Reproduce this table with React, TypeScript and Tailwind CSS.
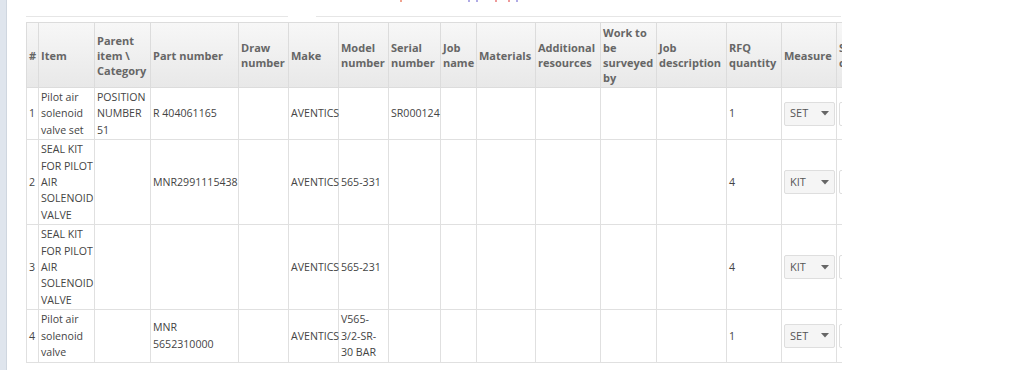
import React from "react";

const widths = [12, 56, 56, 88, 50, 50, 50, 52, 36, 59, 65, 56, 70, 55, 55, 90];

const headers: string[][] = [
  ["#"],
  ["Item"],
  ["Parent", "item \\", "Category"],
  ["Part number"],
  ["Draw", "number"],
  ["Make"],
  ["Model", "number"],
  ["Serial", "number"],
  ["Job", "name"],
  ["Materials"],
  ["Additional", "resources"],
  ["Work to", "be", "surveyed", "by"],
  ["Job", "description"],
  ["RFQ", "quantity"],
  ["Measure"],
  ["Supplier", "comment"],
];

type Row = {
  n: string;
  item: string[];
  parent: string[];
  part: string[];
  make: string;
  model: string[];
  serial: string;
  qty: string;
  measure: string;
};

const rows: Row[] = [
  {
    n: "1",
    item: ["Pilot air", "solenoid", "valve set"],
    parent: ["POSITION", "NUMBER", "51"],
    part: ["R 404061165"],
    make: "AVENTICS",
    model: [],
    serial: "SR000124",
    qty: "1",
    measure: "SET",
  },
  {
    n: "2",
    item: ["SEAL KIT", "FOR PILOT", "AIR", "SOLENOID", "VALVE"],
    parent: [],
    part: ["MNR2991115438"],
    make: "AVENTICS",
    model: ["565-331"],
    serial: "",
    qty: "4",
    measure: "KIT",
  },
  {
    n: "3",
    item: ["SEAL KIT", "FOR PILOT", "AIR", "SOLENOID", "VALVE"],
    parent: [],
    part: [],
    make: "AVENTICS",
    model: ["565-231"],
    serial: "",
    qty: "4",
    measure: "KIT",
  },
  {
    n: "4",
    item: ["Pilot air", "solenoid", "valve"],
    parent: [],
    part: ["MNR", "5652310000"],
    make: "AVENTICS",
    model: ["V565-", "3/2-SR-", "30 BAR"],
    serial: "",
    qty: "1",
    measure: "SET",
  },
];

function Lines({ lines }: { lines: string[] }) {
  return (
    <>
      {lines.map((l, i) => (
        <div key={i} className="whitespace-nowrap">
          {l}
        </div>
      ))}
    </>
  );
}

const td = "border border-[#e0e0e0] px-[2px] py-px align-middle";

const dots = [
  { x: 374, c: "bg-[#e2502b]" },
  { x: 442, c: "bg-[#6a5fd0]" },
  { x: 450, c: "bg-[#6a5fd0]" },
  { x: 469, c: "bg-[#e04040]" },
  { x: 482, c: "bg-[#e04040]" },
  { x: 490, c: "bg-[#6a5fd0]" },
];

export default function App() {
  return (
    <div
      className="w-[1024px] h-[370px] flex bg-white overflow-hidden text-[#444]"
      style={{ fontFamily: '"Open Sans", "Liberation Sans", sans-serif' }}
    >
      <div className="w-[7px] shrink-0 bg-[#dfe5ed] border-r border-[#cfd6df]" />
      <div className="flex-1 pl-[19px]">
        <div className="h-[17px] relative">
          <div className="flex h-[17px] items-end">
            <div className="w-[262px] border-b border-[#e6e6e6]" />
            <div className="w-[28px]" />
            <div className="w-[525px] border-b border-[#e6e6e6]" />
          </div>
          {dots.map((d, i) => (
            <div
              key={i}
              className={`absolute top-0 w-[2px] h-[2px] rounded-full opacity-70 ${d.c}`}
              style={{ left: d.x }}
            />
          ))}
        </div>
        <div className="mt-[5px] w-[816px] overflow-hidden">
          <table className="table-fixed border-collapse text-[10.6px] leading-[16.4px] w-[900px]">
            <colgroup>
              {widths.map((w, i) => (
                <col key={i} style={{ width: w }} />
              ))}
            </colgroup>
            <thead>
              <tr className="h-[65px] bg-linear-to-b from-[#f7f7f7] to-[#e8e8e8]">
                {headers.map((h, i) => (
                  <th
                    key={i}
                    className="border border-[#dcdcdc] px-[2px] py-[1px] text-left align-middle font-bold text-[11px] text-[#666] leading-[15px]"
                  >
                    <Lines lines={h} />
                  </th>
                ))}
              </tr>
            </thead>
            <tbody>
              {rows.map((r) => (
                <tr key={r.n}>
                  <td className={td}>{r.n}</td>
                  <td className={td}>
                    <Lines lines={r.item} />
                  </td>
                  <td className={td}>
                    <Lines lines={r.parent} />
                  </td>
                  <td className={td}>
                    <Lines lines={r.part} />
                  </td>
                  <td className={td} />
                  <td className={td}>{r.make}</td>
                  <td className={td}>
                    <Lines lines={r.model} />
                  </td>
                  <td className={td}>{r.serial}</td>
                  <td className={td} />
                  <td className={td} />
                  <td className={td} />
                  <td className={td} />
                  <td className={td} />
                  <td className={td}>{r.qty}</td>
                  <td className={td}>
                    <div className="w-[51px] h-[24px] flex items-center justify-between pl-[5px] pr-[5px] bg-[#f5f5f5] border border-[#dedede] rounded-[2px] text-[#555] text-[11px]">
                      <span>{r.measure}</span>
                      <svg width="8" height="5" viewBox="0 0 8 5">
                        <path d="M0 0 L8 0 L4 4.5 Z" fill="#666" />
                      </svg>
                    </div>
                  </td>
                  <td className={td}>
                    <div className="w-[80px] h-[24px] bg-white border border-[#dedede] rounded-[2px]" />
                  </td>
                </tr>
              ))}
            </tbody>
          </table>
        </div>
      </div>
    </div>
  );
}
